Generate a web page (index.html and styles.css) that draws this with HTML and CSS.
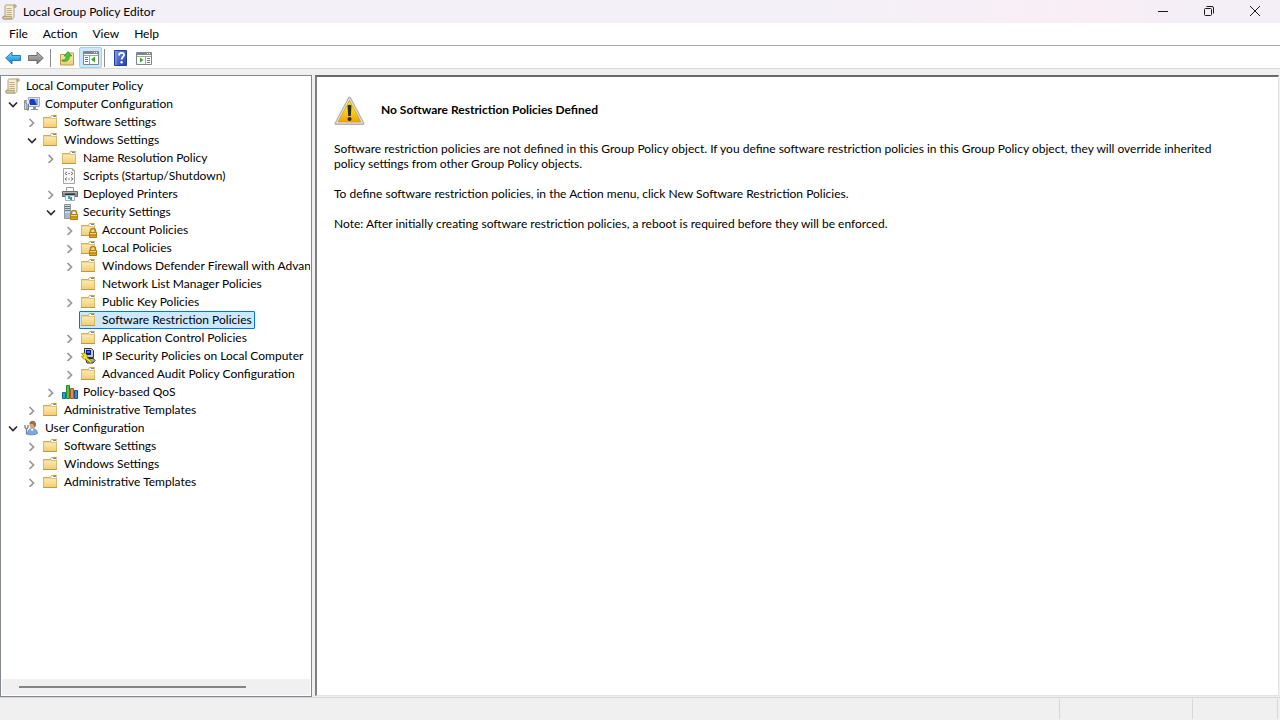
FILE: index.html
```
<!DOCTYPE html>
<html lang="en">
<head>
  <meta charset="utf-8">
  <title>Local Group Policy Editor</title>
  <link rel="stylesheet" href="styles.css">
</head>
<body>

  <!-- shared icons -->
  <svg class="sprite" aria-hidden="true">
    <defs>
      <linearGradient id="folderFill" x1="0" y1="0" x2="0" y2="1">
        <stop offset="0" stop-color="#fdebb4"/><stop offset="1" stop-color="#f0cc74"/>
      </linearGradient>
      <linearGradient id="blueFill" x1="0" y1="0" x2="0" y2="1">
        <stop offset="0" stop-color="#9bdcfb"/><stop offset=".5" stop-color="#32b0ef"/><stop offset="1" stop-color="#1683cc"/>
      </linearGradient>
      <linearGradient id="grayFill" x1="0" y1="0" x2="0" y2="1">
        <stop offset="0" stop-color="#bdbdbd"/><stop offset="1" stop-color="#777"/>
      </linearGradient>
      <linearGradient id="helpFill" x1="0" y1="0" x2="1" y2="1">
        <stop offset="0" stop-color="#6f8fe6"/><stop offset="1" stop-color="#2140ae"/>
      </linearGradient>
      <linearGradient id="warnFill" x1="0" y1="0" x2="0" y2="1">
        <stop offset="0" stop-color="#fff100"/><stop offset=".5" stop-color="#fbd20c"/><stop offset="1" stop-color="#f0a010"/>
      </linearGradient>
    </defs>
    <symbol id="scroll" viewBox="0 0 16 16">
      <path d="M4 1h9c1.500 0 1.500 2.200 0 2.200H12V12c0 2-.8 3-2 3H2C0 15 0 12.300 2 12.300h1V3c0-1.300.4-2 1-2z" fill="#f8eecb" stroke="#a5987a" stroke-width=".9"/>
      <path d="M12 3.200c-.8-.4-.8-1.800.1-2.200H13c1.500 0 1.500 2.200 0 2.200zM2 12.300h7.500c-.6.7-.5 2 .3 2.700H2c-1.600 0-1.700-2.500 0-2.700z" fill="#dccb98" stroke="#978a6c" stroke-width=".7"/>
      <path d="M4.500 4.500h5M4.500 6.500h5.500M4.500 8.500h5M4.500 10.500h5.500" stroke="#b9ad8b"/>
    </symbol>
    <symbol id="folder" viewBox="0 0 16 16">
      <path d="M.5 3.500h7l1-2h5v12H.5z" fill="#ecd08a" stroke="#c9a655"/>
      <path d="M8.500 2h5v2.500H8z" fill="#fff"/>
      <path d="M10 2.500h3" stroke="#3f92de"/>
      <path d="M.5 4h7l1.500.5h4.500v9H.5z" fill="url(#folderFill)" stroke="#d9b766" stroke-width=".8"/>
      <path d="M0 13.500h14" stroke="#c19a48"/>
    </symbol>
    <symbol id="lock" viewBox="0 0 16 16">
      <path d="M9.500 11V9a2.500 2.500 0 0 1 5 0v2" fill="none" stroke="#b5841c" stroke-width="1.500"/>
      <path d="M8.500 10.500h7v5h-7z" fill="#dca52c" stroke="#b07a14"/>
      <path d="M9 13h6" stroke="#b47a11"/>
      <path d="M9 11.500h6" stroke="#fbd873"/>
    </symbol>
    <symbol id="folderLock" viewBox="0 0 16 16">
      <use href="#folder"/><use href="#lock"/>
    </symbol>
    <symbol id="computer" viewBox="0 0 16 16">
      <path d="M4.500 1.500h11v9h-11z" fill="#e0e4ea" stroke="#a5adba"/>
      <path d="M6 3h8v6H6z" fill="#173fba"/>
      <path d="M10 3h4v6h-1z" fill="#7ba5ef"/>
      <path d="M9 11h3v2h2v1H7v-1h2z" fill="#8b93a0"/>
      <path d="M.5 4.500h3.500v9H.5z" fill="#d0d5dc" stroke="#8d95a2"/>
      <path d="M2 4v3l1 1.500V14h1.500V8.500l1-1.500V4" fill="#e8eaee" stroke="#707783"/>
    </symbol>
    <symbol id="script" viewBox="0 0 16 16">
      <path d="M1.500.5h9l2 2v13h-11z" fill="#f8f8f8" stroke="#a6a6a6"/>
      <path d="M10.500.5v2h2" fill="none" stroke="#a6a6a6"/>
      <path d="M5 4L3 5.500 5 7M9 4l2 1.500L9 7M5 9.500L3 11l2 1.500M9 9.500l2 1.500-2 1.500" fill="none" stroke="#6c7074"/>
      <path d="M6 5.500h2M6 11h2" stroke="#8d9297"/>
    </symbol>
    <symbol id="printer" viewBox="0 0 16 16">
      <path d="M4.500 1.500h7v4h-7z" fill="#fafafa" stroke="#9a9a9a"/>
      <path d="M.5 5.500h15v5H.5z" fill="#8b8f94" stroke="#66696d"/>
      <path d="M1 6.500h14" stroke="#aeb2b5"/>
      <path d="M3 8.500h10" stroke="#33363a" stroke-width="2"/>
      <path d="M3.500 9.500h9v5h-9z" fill="#eef6fc" stroke="#a5afb8"/>
      <path d="M6 10h2v3H6z" fill="#38a7e3"/>
      <path d="M8 11h2v3H8z" fill="#3f9878"/>
    </symbol>
    <symbol id="server" viewBox="0 0 16 16">
      <path d="M2.500.5h6v14h-6z" fill="#c9d5df" stroke="#8997a3"/>
      <path d="M3 2.500h5M3 4.500h5M3 6.500h5" stroke="#657684"/>
      <path d="M3 9h5v5H3z" fill="#a9bac8"/>
      <use href="#lock"/>
    </symbol>
    <symbol id="ipsec" viewBox="0 0 16 16">
      <path d="M3.500.5h7l2 2v7h-9z" fill="#c8c8c8" stroke="#333"/>
      <path d="M5 2h5v5H5z" fill="#0a1a8f"/>
      <path d="M6 3h3v2H6z" fill="#2d77ef"/>
      <path d="M4.500 10.500h8l1.500 2-2 2.500H6z" fill="#aaa" stroke="#333"/>
      <path d="M.5 5.500L4 5l2 2v2.500l5 4-1.500 1.500-5-4H2.500L.5 8.500 3 8z" fill="#f5eb1c" stroke="#847c00" stroke-width=".7"/>
    </symbol>
    <symbol id="bars" viewBox="0 0 16 16">
      <path d="M.5 8.500h3v6h-3z" fill="#2d9fe0" stroke="#1467a5"/>
      <path d="M4.500 1.500h3v13h-3z" fill="#4cc451" stroke="#258a32"/>
      <path d="M8.500 4.500h3v10h-3z" fill="#f28a50" stroke="#b54f23"/>
      <path d="M12.500 6.500h3v8h-3z" fill="#2d8fcf" stroke="#125887"/>
    </symbol>
    <symbol id="user" viewBox="0 0 16 16">
      <path d="M3.500 14.500c0-4 1.500-6 4.500-6s5.500 2 5.500 5c-2 1.500-7.500 1.500-10 1z" fill="#76abd9" stroke="#4d7eaa" stroke-width=".7"/>
      <path d="M6.500 8.500l1.500 3 2-3z" fill="#fff"/>
      <path d="M5.500 4.500c0-4.500 6-4.500 6 0 0 2.500-1 4.500-3 4.500s-3-2-3-4.500z" fill="#d9a377"/>
      <path d="M5.500 4C5.500 0 11.500-.5 12 4c0 1.500-.5 3-1.500 3.500 0-2-1-3-2-3.500z" fill="#8d7150"/>
      <path d="M1 5v2.500L2.500 9 4 7.500V5M2.500 9v5.500" fill="none" stroke="#7a8188" stroke-width="1.300"/>
    </symbol>
    <symbol id="expanded" viewBox="0 0 10 10">
      <path d="M1 3.500l4 4 4-4" fill="none" stroke="#2b2b2b" stroke-width="1.700"/>
    </symbol>
    <symbol id="collapsed" viewBox="0 0 10 10">
      <path d="M2.500 2l4 4-4 4" fill="none" stroke="#979797" stroke-width="1.700"/>
    </symbol>
  </svg>

  <header class="titlebar">
    <svg class="icon"><use href="#scroll"/></svg>
    <h1>Local Group Policy Editor</h1>
    <div class="window-buttons">
      <button aria-label="Minimize"><svg viewBox="0 0 12 12"><path d="M1 6.500h10"/></svg></button>
      <button aria-label="Restore"><svg viewBox="0 0 12 12"><rect x="1.500" y="3.500" width="7" height="7" rx="1"/><path d="M3.500 1.500H9Q10.500 1.500 10.500 3v5.500"/></svg></button>
      <button aria-label="Close"><svg viewBox="0 0 12 12"><path d="M1 1l10 10M11 1L1 11"/></svg></button>
    </div>
  </header>

  <nav class="menubar">
    <button>File</button>
    <button>Action</button>
    <button>View</button>
    <button>Help</button>
  </nav>

  <div class="toolbar">
    <button aria-label="Back"><svg class="icon" viewBox="0 0 16 16"><path d="M.7 8L7 2v3.500h8.500v5H7V14z" fill="url(#blueFill)" stroke="#1b6fae" stroke-width=".9"/></svg></button>
    <button aria-label="Forward"><svg class="icon" viewBox="0 0 16 16"><path d="M15.300 8L9 2v3.500H.5v5H9V14z" fill="url(#grayFill)" stroke="#646464" stroke-width=".9"/></svg></button>
    <span class="separator"></span>
    <button aria-label="Up one level"><svg class="icon" viewBox="0 0 16 16"><path d="M1.500 4.500h6l1-1.500h6v12h-13z" fill="url(#folderFill)" stroke="#c39b43"/><path d="M3 10c3.500 0 4-2 4-4H5l4-4.500L13 6h-2.500c0 4-2.500 6.500-7.500 5z" fill="#4fc43b" stroke="#299021" stroke-width=".6"/></svg></button>
    <button class="pressed" aria-label="Show/Hide Console Tree" aria-pressed="true"><svg class="icon" viewBox="0 0 16 16"><path d="M.5 1.500h15v13H.5z" fill="#fff" stroke="#80868d"/><path d="M1 2h14v2H1z" fill="#80868d"/><path d="M11 2.500h1M13 2.500h1" stroke="#fff"/><path d="M1 5.500h14M6.500 5v9" stroke="#a0a5aa"/><path d="M2 7.500h3M2 9.500h3M2 11.500h3" stroke="#4678ac"/><path d="M12 6.500v6L8 9.500z" fill="#37aa29"/></svg></button>
    <span class="separator"></span>
    <button aria-label="Help"><svg class="icon" viewBox="0 0 16 16"><path d="M1.500.5h12v15h-12z" fill="url(#helpFill)" stroke="#2440a0"/><path d="M3 1v14" stroke="#8ea5ea"/><path d="M6 5.500c0-3.500 5-3.500 5-.500 0 2-2.300 2-2.300 4.500" fill="none" stroke="#fff" stroke-width="1.800"/><circle cx="8.600" cy="12.200" r="1.200" fill="#fff"/></svg></button>
    <button aria-label="Show/Hide Action Pane"><svg class="icon" viewBox="0 0 16 16"><path d="M.5 2.500h15v12H.5z" fill="#fff" stroke="#80868d"/><path d="M1 3h14v2H1z" fill="#80868d"/><path d="M11 3.500h1M13 3.500h1" stroke="#fff"/><path d="M1 6.500h14M9.500 6v8" stroke="#a0a5aa"/><path d="M11 8.500h3M11 10.500h3M11 12.500h3" stroke="#777"/><path d="M4 7.500v5l3.500-2.500z" fill="#37aa29"/></svg></button>
  </div>

  <main class="panes">
    <section class="tree-pane">
      <div class="tree">
        <a class="node" href="#"><svg class="icon"><use href="#scroll"/></svg>Local Computer Policy</a>
        <ul>
          <li>
            <div class="row"><button class="toggle" aria-label="Collapse"><svg><use href="#expanded"/></svg></button><a class="node" href="#"><svg class="icon"><use href="#computer"/></svg>Computer Configuration</a></div>
            <ul>
              <li><div class="row"><button class="toggle" aria-label="Expand"><svg><use href="#collapsed"/></svg></button><a class="node" href="#"><svg class="icon"><use href="#folder"/></svg>Software Settings</a></div></li>
              <li>
                <div class="row"><button class="toggle" aria-label="Collapse"><svg><use href="#expanded"/></svg></button><a class="node" href="#"><svg class="icon"><use href="#folder"/></svg>Windows Settings</a></div>
                <ul>
                  <li><div class="row"><button class="toggle" aria-label="Expand"><svg><use href="#collapsed"/></svg></button><a class="node" href="#"><svg class="icon"><use href="#folder"/></svg>Name Resolution Policy</a></div></li>
                  <li><div class="row leaf"><a class="node" href="#"><svg class="icon"><use href="#script"/></svg>Scripts (Startup/Shutdown)</a></div></li>
                  <li><div class="row"><button class="toggle" aria-label="Expand"><svg><use href="#collapsed"/></svg></button><a class="node" href="#"><svg class="icon"><use href="#printer"/></svg>Deployed Printers</a></div></li>
                  <li>
                    <div class="row"><button class="toggle" aria-label="Collapse"><svg><use href="#expanded"/></svg></button><a class="node" href="#"><svg class="icon"><use href="#server"/></svg>Security Settings</a></div>
                    <ul>
                      <li><div class="row"><button class="toggle" aria-label="Expand"><svg><use href="#collapsed"/></svg></button><a class="node" href="#"><svg class="icon"><use href="#folderLock"/></svg>Account Policies</a></div></li>
                      <li><div class="row"><button class="toggle" aria-label="Expand"><svg><use href="#collapsed"/></svg></button><a class="node" href="#"><svg class="icon"><use href="#folderLock"/></svg>Local Policies</a></div></li>
                      <li><div class="row"><button class="toggle" aria-label="Expand"><svg><use href="#collapsed"/></svg></button><a class="node" href="#"><svg class="icon"><use href="#folder"/></svg>Windows Defender Firewall with Advanced Security</a></div></li>
                      <li><div class="row leaf"><a class="node" href="#"><svg class="icon"><use href="#folder"/></svg>Network List Manager Policies</a></div></li>
                      <li><div class="row"><button class="toggle" aria-label="Expand"><svg><use href="#collapsed"/></svg></button><a class="node" href="#"><svg class="icon"><use href="#folder"/></svg>Public Key Policies</a></div></li>
                      <li><div class="row leaf"><a class="node selected" href="#"><svg class="icon"><use href="#folder"/></svg>Software Restriction Policies</a></div></li>
                      <li><div class="row"><button class="toggle" aria-label="Expand"><svg><use href="#collapsed"/></svg></button><a class="node" href="#"><svg class="icon"><use href="#folder"/></svg>Application Control Policies</a></div></li>
                      <li><div class="row"><button class="toggle" aria-label="Expand"><svg><use href="#collapsed"/></svg></button><a class="node" href="#"><svg class="icon"><use href="#ipsec"/></svg>IP Security Policies on Local Computer</a></div></li>
                      <li><div class="row"><button class="toggle" aria-label="Expand"><svg><use href="#collapsed"/></svg></button><a class="node" href="#"><svg class="icon"><use href="#folder"/></svg>Advanced Audit Policy Configuration</a></div></li>
                    </ul>
                  </li>
                  <li><div class="row"><button class="toggle" aria-label="Expand"><svg><use href="#collapsed"/></svg></button><a class="node" href="#"><svg class="icon"><use href="#bars"/></svg>Policy-based QoS</a></div></li>
                </ul>
              </li>
              <li><div class="row"><button class="toggle" aria-label="Expand"><svg><use href="#collapsed"/></svg></button><a class="node" href="#"><svg class="icon"><use href="#folder"/></svg>Administrative Templates</a></div></li>
            </ul>
          </li>
          <li>
            <div class="row"><button class="toggle" aria-label="Collapse"><svg><use href="#expanded"/></svg></button><a class="node" href="#"><svg class="icon"><use href="#user"/></svg>User Configuration</a></div>
            <ul>
              <li><div class="row"><button class="toggle" aria-label="Expand"><svg><use href="#collapsed"/></svg></button><a class="node" href="#"><svg class="icon"><use href="#folder"/></svg>Software Settings</a></div></li>
              <li><div class="row"><button class="toggle" aria-label="Expand"><svg><use href="#collapsed"/></svg></button><a class="node" href="#"><svg class="icon"><use href="#folder"/></svg>Windows Settings</a></div></li>
              <li><div class="row"><button class="toggle" aria-label="Expand"><svg><use href="#collapsed"/></svg></button><a class="node" href="#"><svg class="icon"><use href="#folder"/></svg>Administrative Templates</a></div></li>
            </ul>
          </li>
        </ul>
      </div>
      <div class="scrollbar"><div class="thumb"></div></div>
    </section>

    <section class="details">
      <div class="details-header">
        <svg class="warning" viewBox="0 0 32 32">
          <path d="M15.500 3L29 28.500H2z" fill="#d5d5d5" stroke="#b4b4b4" stroke-width="3" stroke-linejoin="round"/>
          <path d="M15.500 3.500L28.500 28h-26z" fill="#e6e6e6" stroke="#e6e6e6" stroke-linejoin="round"/>
          <path d="M15.500 5.500L27 27H4z" fill="url(#warnFill)" stroke="#d89b12" stroke-width=".8" stroke-linejoin="round"/>
          <path d="M13.500 10.500q2-1.500 4 0l-.7 10.500h-2.600z" fill="#2b2b20"/>
          <circle cx="15.500" cy="24" r="2" fill="#2b2b20"/>
        </svg>
        <h2>No Software Restriction Policies Defined</h2>
      </div>
      <p>Software restriction policies are not defined in this Group Policy object. If you define software restriction policies in this Group Policy object, they will override inherited policy settings from other Group Policy objects.</p>
      <p>To define software restriction policies, in the Action menu, click New Software Restriction Policies.</p>
      <p>Note: After initially creating software restriction policies, a reboot is required before they will be enforced.</p>
    </section>
  </main>

  <footer class="statusbar">
    <span class="status-main"></span>
    <span class="status-mid"></span>
    <span class="status-end"></span>
  </footer>

</body>
</html>
```
FILE: styles.css
```
* {
  box-sizing: border-box;
}
body {
  margin: 0;
  height: 100vh;
  display: flex;
  flex-direction: column;
  overflow: hidden;
  background-color: #f0f0f0;
  color: #000;
  font-family: Lato, "Open Sans", sans-serif;
  font-size: 12px;
  line-height: 15px;
}
button {
  padding: 0;
  border: 1px solid transparent;
  background: none;
  color: inherit;
  font: inherit;
}
.sprite {
  position: absolute;
  width: 0;
  height: 0;
}
.icon {
  width: 16px;
  height: 16px;
  flex: none;
}

/* Title bar */
.titlebar {
  display: flex;
  align-items: center;
  gap: 5px;
  height: 23px;
  padding-left: 2px;
  flex: none;
  background: linear-gradient(90deg, #f3f0f7 0%, #f3f0f7 60%, #f9eef6 85%, #f4eef6 93%);
}
.titlebar h1 {
  margin: 0;
  flex: 1;
  font-size: 12px;
  font-weight: normal;
}
.window-buttons {
  display: flex;
  align-self: stretch;
}
.window-buttons button {
  width: 46px;
  display: flex;
  align-items: center;
  justify-content: center;
  padding-right: 4px;
  padding-bottom: 2px;
}
.window-buttons svg {
  width: 12px;
  height: 12px;
  fill: none;
  stroke: #1a1a1a;
}

/* Menu and toolbar */
.menubar {
  display: flex;
  height: 23px;
  padding-left: 2px;
  flex: none;
  background-color: #fff;
  border-bottom: 1px solid #a9a9b0;
}
.menubar button {
  padding: 0 7px 2px 6px;
}
.toolbar {
  display: flex;
  align-items: center;
  height: 23px;
  padding: 1px 0 0 1px;
  flex: none;
  background-color: #fff;
  border-bottom: 1px solid #d9d9d9;
}
.toolbar button {
  display: flex;
  align-items: center;
  justify-content: center;
  width: 23px;
  height: 21px;
}
.toolbar .pressed {
  margin-left: 1px;
  background-color: #cce8ff;
  border-color: #99d1ff;
  border-radius: 2px;
}
.separator {
  width: 1px;
  height: 18px;
  margin: 0 4px 0 3px;
  background-color: #8c8c8c;
}
.pressed + .separator {
  margin: 0 4px 0 2px;
}

/* Panes */
.panes {
  display: flex;
  flex: 1;
  min-height: 0;
  gap: 3px;
  padding: 6px 1px 0 0;
}
.tree-pane {
  display: flex;
  flex-direction: column;
  width: 312px;
  flex: none;
  padding: 1px;
  background-color: #fff;
  border: 1px solid #828790;
}
.tree {
  flex: 1;
  min-height: 0;
  padding-left: 1px;
  overflow: hidden;
}
.tree ul {
  margin: 0;
  padding-left: 19px;
  list-style: none;
}
.tree > ul {
  padding-left: 2px;
}
.row {
  display: flex;
}
.row.leaf {
  padding-left: 17px;
}
.toggle {
  display: flex;
  align-items: center;
  width: 17px;
  height: 18px;
  padding-left: 2px;
  flex: none;
}
.toggle svg {
  width: 10px;
  height: 10px;
}
.node {
  display: flex;
  align-items: flex-start;
  gap: 5px;
  width: max-content;
  height: 18px;
  padding: 0 2px 0 1px;
  border: 1px solid transparent;
  color: inherit;
  text-decoration: none;
  white-space: nowrap;
}
.node.selected {
  background-color: #cce8ff;
  border-color: #0078d7;
  border-radius: 1px;
}
.scrollbar {
  display: flex;
  align-items: center;
  height: 16px;
  padding: 0 64px 0 17px;
  background-color: #f0f0f0;
}
.thumb {
  flex: 1;
  height: 2px;
  background-color: #858585;
}

/* Result pane */
.details {
  flex: 1;
  min-width: 0;
  margin-bottom: 1px;
  padding: 18px 48px 0 17px;
  background-color: #fff;
  border: 2px solid #696969;
  border-left-color: #808080;
  border-right: 1px solid #e3e3e3;
  border-bottom: 1px solid #e3e3e3;
}
.details-header {
  display: flex;
  align-items: center;
  gap: 15px;
  margin-bottom: 14px;
}
.details h2 {
  margin: 0;
  padding-bottom: 3px;
  font-size: 12px;
  line-height: 15px;
}
.details p {
  margin: 0 0 15px;
}
.warning {
  width: 32px;
  height: 32px;
}

/* Status bar */
.statusbar {
  display: flex;
  height: 23px;
  padding: 1px 2px 1px 0;
  flex: none;
  border-top: 1px solid #d7d7d7;
}
.statusbar span {
  border-right: 1px solid #d7d7d7;
}
.status-main {
  flex: 1;
}
.status-mid {
  width: 133px;
}
.status-end {
  width: 85px;
}
```
